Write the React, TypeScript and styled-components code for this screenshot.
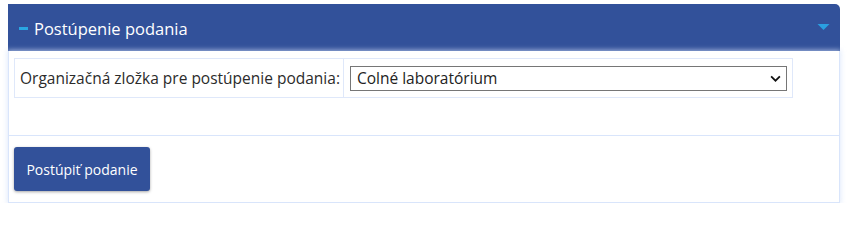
import React from "react";
import styled, { createGlobalStyle } from "styled-components";

const GlobalStyle = createGlobalStyle`
  html, body {
    margin: 0;
    padding: 0;
    background: #ffffff;
  }
  body {
    font-family: "Open Sans", "Noto Sans", sans-serif;
    color: #333333;
  }
`;

export default function App() {
  return (
    <>
      <GlobalStyle />
      <Page>
        <Panel>
          <Header>
            <Minus />
            <Title>Postúpenie podania</Title>
            <Caret viewBox="0 0 12 6">
              <path d="M0 0 L12 0 L6 6 Z" fill="#2a9fe0" />
            </Caret>
          </Header>
          <Body>
            <Section>
              <FormTable>
                <tbody>
                  <tr>
                    <LabelCell>Organizačná zložka pre postúpenie podania:</LabelCell>
                    <FieldCell>
                      <SelectWrap>
                        <Select defaultValue="colne">
                          <option value="colne">Colné laboratórium</option>
                        </Select>
                        <Chevron viewBox="0 0 12 8">
                          <path
                            d="M1 1.5 L6 6.5 L11 1.5"
                            fill="none"
                            stroke="#111111"
                            strokeWidth="2"
                          />
                        </Chevron>
                      </SelectWrap>
                    </FieldCell>
                  </tr>
                </tbody>
              </FormTable>
            </Section>
            <Footer>
              <Button type="button">Postúpiť podanie</Button>
            </Footer>
          </Body>
        </Panel>
      </Page>
    </>
  );
}

const Page = styled.div`
  padding: 4px 8px 0 8px;
`;

const Panel = styled.div`
  width: 832px;
`;

const Header = styled.div`
  height: 47px;
  background: #32519a;
  border-radius: 0 5px 0 0;
  display: flex;
  align-items: center;
  padding: 0 10px 0 11px;
  box-sizing: border-box;
`;

const Minus = styled.span`
  display: inline-block;
  width: 9px;
  height: 3px;
  background: #2aa6e2;
  margin-top: 2px;
  margin-right: 6px;
`;

const Title = styled.span`
  flex: 1;
  color: #ffffff;
  font-size: 16.5px;
  line-height: 22px;
  margin-top: 3px;
`;

const Caret = styled.svg`
  width: 13px;
  height: 6px;
  margin-top: -2px;
`;

const Body = styled.div`
  border: 1px solid #d9e5fb;
  border-top: none;
  background: #ffffff;
  box-shadow: 0 0 5px 1px rgba(214, 226, 250, 0.7);
`;

const Section = styled.div`
  height: 85px;
  padding: 7px 5px 0 5px;
  box-sizing: border-box;
  border-bottom: 1px solid #d9e5fb;
`;

const FormTable = styled.table`
  border-collapse: collapse;
  width: 778px;
`;

const LabelCell = styled.td`
  border: 1px solid #dfe8fa;
  height: 38px;
  padding: 0 3px 0 5px;
  font-size: 15.5px;
  color: #2b2b2b;
  white-space: nowrap;
  width: 1px;
`;

const FieldCell = styled.td`
  border: 1px solid #dfe8fa;
  padding: 0 5px 0 6px;
`;

const SelectWrap = styled.div`
  position: relative;
  width: 437px;
`;

const Select = styled.select`
  appearance: none;
  width: 100%;
  height: 25px;
  font-family: "Open Sans", "Noto Sans", sans-serif;
  font-size: 15.5px;
  color: #222222;
  border: 1px solid #767676;
  border-radius: 0;
  background: #ffffff;
  padding: 0 24px 0 6px;
  display: block;
`;

const Chevron = styled.svg`
  position: absolute;
  right: 6px;
  top: 9px;
  width: 11px;
  height: 7px;
  pointer-events: none;
`;

const Footer = styled.div`
  padding: 11px 5px 11px 5px;
`;

const Button = styled.button`
  width: 136px;
  height: 44px;
  background: #32519a;
  color: #ffffff;
  border: none;
  border-radius: 3px;
  font-family: "Open Sans", "Noto Sans", sans-serif;
  font-size: 14px;
  box-shadow: 0 1px 3px rgba(0, 0, 0, 0.35);
  cursor: pointer;
`;
